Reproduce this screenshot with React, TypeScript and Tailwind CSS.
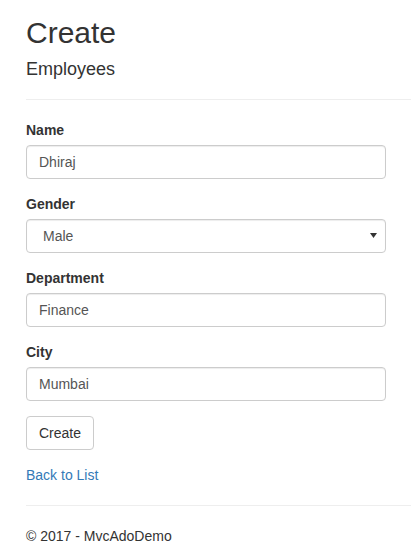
export default function App() {
    const field = "block w-[360px] h-[34px] px-[12px] text-[14px] leading-[20px] text-[#555] bg-white border border-[#ccc] rounded-[4px] shadow-[inset_0_1px_1px_rgba(0,0,0,0.075)] outline-none";
    const label = "block mb-[5px] text-[14px] leading-[20px] font-bold text-[#333]";

    return (
        <div className="min-h-[558px] bg-white pl-[26px] text-[#333] text-[14px] leading-[20px] font-['Liberation_Sans',Arial,sans-serif]">
            <h2 className="pt-[16px] text-[30px] leading-[33px] font-normal">Create</h2>
            <h4 className="mt-[10px] text-[18px] leading-[20px] font-normal">Employees</h4>
            <hr className="mt-[20px] mb-[20px] border-0 border-t border-[#eee]" />

            <form>
                <div className="mb-[15px]">
                    <label className={label}>Name</label>
                    <input className={field} defaultValue="Dhiraj" />
                </div>
                <div className="mb-[15px]">
                    <label className={label}>Gender</label>
                    <div className="relative w-[360px]">
                        <select className={field + " appearance-none pl-[16px]"} defaultValue="Male">
                            <option>Male</option>
                            <option>Female</option>
                        </select>
                        <svg className="absolute right-[9px] top-[14px]" width="7" height="5" viewBox="0 0 7 5">
                            <path d="M0 0 H7 L3.5 5 Z" fill="#333" />
                        </svg>
                    </div>
                </div>
                <div className="mb-[15px]">
                    <label className={label}>Department</label>
                    <input className={field} defaultValue="Finance" />
                </div>
                <div className="mb-[15px]">
                    <label className={label}>City</label>
                    <input className={field} defaultValue="Mumbai" />
                </div>
                <div className="mb-[15px]">
                    <button type="button" className="h-[34px] px-[12px] text-[14px] leading-[20px] text-[#333] bg-white border border-[#ccc] rounded-[4px]">
                        Create
                    </button>
                </div>
            </form>

            <div>
                <a href="#" className="text-[#337ab7]">Back to List</a>
            </div>

            <hr className="mt-[20px] mb-[20px] border-0 border-t border-[#eee]" />
            <footer>
                <p>© 2017 - MvcAdoDemo</p>
            </footer>
        </div>
    )
}
